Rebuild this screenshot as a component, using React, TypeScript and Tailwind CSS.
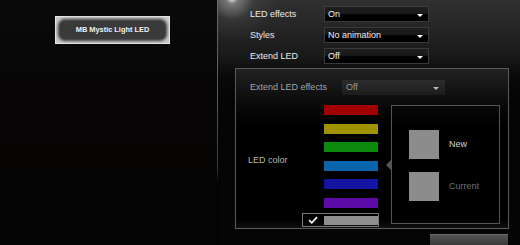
import React from "react";

function Dropdown({ value, w, h, dim }: { value: string; w: string; h: string; dim?: boolean }) {
  return (
    <div
      className={
        dim
          ? `${w} ${h} relative flex items-center pl-[4px] bg-[linear-gradient(to_bottom,#2c2c2c_0%,#242424_50%,#1c1c1c_100%)] text-[#9a9a9a]`
          : `${w} ${h} relative flex items-center pl-[3px] border border-[#3a3a3a] bg-[linear-gradient(to_bottom,#1e1e1e_0%,#1a1a1a_45%,#000_55%,#000_100%)] text-[#f0f0f0]`
      }
    >
      <span className="text-[9px] leading-none">{value}</span>
      <div
        className={
          dim
            ? "absolute right-[6px] top-[7px] w-0 h-0 border-x-[3px] border-x-transparent border-t-[3px] border-t-[#bbb]"
            : "absolute right-[5px] top-[7px] w-0 h-0 border-x-[3px] border-x-transparent border-t-[3px] border-t-white"
        }
      />
    </div>
  );
}

const bars = ["#a00000", "#a09200", "#0b8a0d", "#0a64ac", "#1414a2", "#5c0aa8"];

export default function App() {
  return (
    <div className="w-[520px] h-[245px] flex bg-black overflow-hidden font-['Liberation_Sans',Arial,sans-serif]">
      {/* Left panel */}
      <div className="w-[217px] h-full bg-[linear-gradient(to_bottom,#0b0a0a_0%,#070505_40%,#070404_69%,#050505_70%,#050505_100%)] pt-[16px] pl-[55px]">
        <div className="w-[115px] h-[28px] border border-[#e6e6e6] bg-[#c8c8c8] p-[4px]">
          <div className="w-full h-full rounded-[5px] bg-[#3a3a3a] shadow-[0_0_3px_2px_#3a3a3a] flex items-center justify-center">
            <span className="text-[7.4px] font-bold text-[#f2f2f2] leading-none">MB Mystic Light LED</span>
          </div>
        </div>
      </div>
      {/* Separator */}
      <div className="w-[1px] h-[185px] bg-[linear-gradient(to_bottom,#6a6a6a_0%,#555_60%,#3a3a3a_90%,transparent_100%)]" />
      {/* Right panel */}
      <div className="flex-1 h-full pt-[6px] flex flex-col bg-[radial-gradient(circle_at_14px_-2px,rgba(255,255,255,0.95)_0px,rgba(255,255,255,0.35)_6px,rgba(255,255,255,0.06)_22px,transparent_45px),linear-gradient(to_bottom,#303030_0px,#262626_25px,#1a1a1a_55px,#0a0a0a_75px,#050505_100px,#050505_100%)]">
        <div className="pl-[32px] flex flex-col gap-[5px]">
          {[
            ["LED effects", "On"],
            ["Styles", "No animation"],
            ["Extend LED", "Off"],
          ].map(([l, v]) => (
            <div key={l} className="flex items-center h-[16px]">
              <div className="w-[74px] text-[9px] text-[#ececec] leading-none">{l}</div>
              <Dropdown value={v} w="w-[105px]" h="h-[16px]" />
            </div>
          ))}
        </div>
        <div className="ml-[17px] mt-[4px] w-[274px] h-[168px] border border-[#5a5a5a] bg-[linear-gradient(to_bottom,#222_0px,#141414_20px,#070707_40px,#000_60px,#000_150px,#1c1c1c_166px)] pt-[11px] flex flex-col">
          <div className="flex items-center h-[15px] pl-[14px]">
            <div className="w-[92px] text-[9px] text-[#a4a4a4] leading-none">Extend LED effects</div>
            <Dropdown value="Off" w="w-[103px]" h="h-[15px]" dim />
          </div>
          <div className="mt-[10px] flex items-start">
            <div className="w-[66px] pl-[12px] pt-[51px] text-[9px] text-[#b4b4b4] leading-none">LED color</div>
            <div className="w-[77px] flex flex-col gap-[8.5px]">
              {bars.map((c) => (
                <div key={c} className="h-[10px] flex justify-end pr-[1px]">
                  <div className="w-[54px] h-full" style={{ backgroundColor: c }} />
                </div>
              ))}
              <div className="mt-[-3px] h-[14px] border border-[#7a7a7a] flex items-center justify-between pl-[5px] pr-[0px]">
                <svg width="10" height="8" viewBox="0 0 10 8">
                  <path d="M1 4.2 L3.8 6.8 L9 1.2" stroke="#f0f0f0" strokeWidth="1.8" fill="none" />
                </svg>
                <div className="w-[54px] h-[9px] mt-[1px] bg-[#8e8e8e]" />
              </div>
            </div>
            <div className="ml-[12px] w-[109px] h-[119px] border border-[#555] relative pl-[17px] pt-[24px] flex flex-col gap-[13px]">
              <div className="absolute left-[-6px] top-[54px] w-0 h-0 border-y-[5px] border-y-transparent border-r-[5px] border-r-[#555]" />
              <div className="flex items-center">
                <div className="w-[30px] h-[29px] bg-[#8c8c8c]" />
                <span className="ml-[10px] text-[9px] text-[#d4d4d4] leading-none">New</span>
              </div>
              <div className="flex items-center">
                <div className="w-[30px] h-[29px] bg-[#8c8c8c]" />
                <span className="ml-[10px] text-[9px] text-[#707070] leading-none">Current</span>
              </div>
            </div>
          </div>
        </div>
        <div className="mt-[5px] ml-[212px] w-[78px] h-[12px] border-t border-[#6a6a6a] bg-[linear-gradient(to_bottom,#555,#3a3a3a)]" />
      </div>
    </div>
  );
}
